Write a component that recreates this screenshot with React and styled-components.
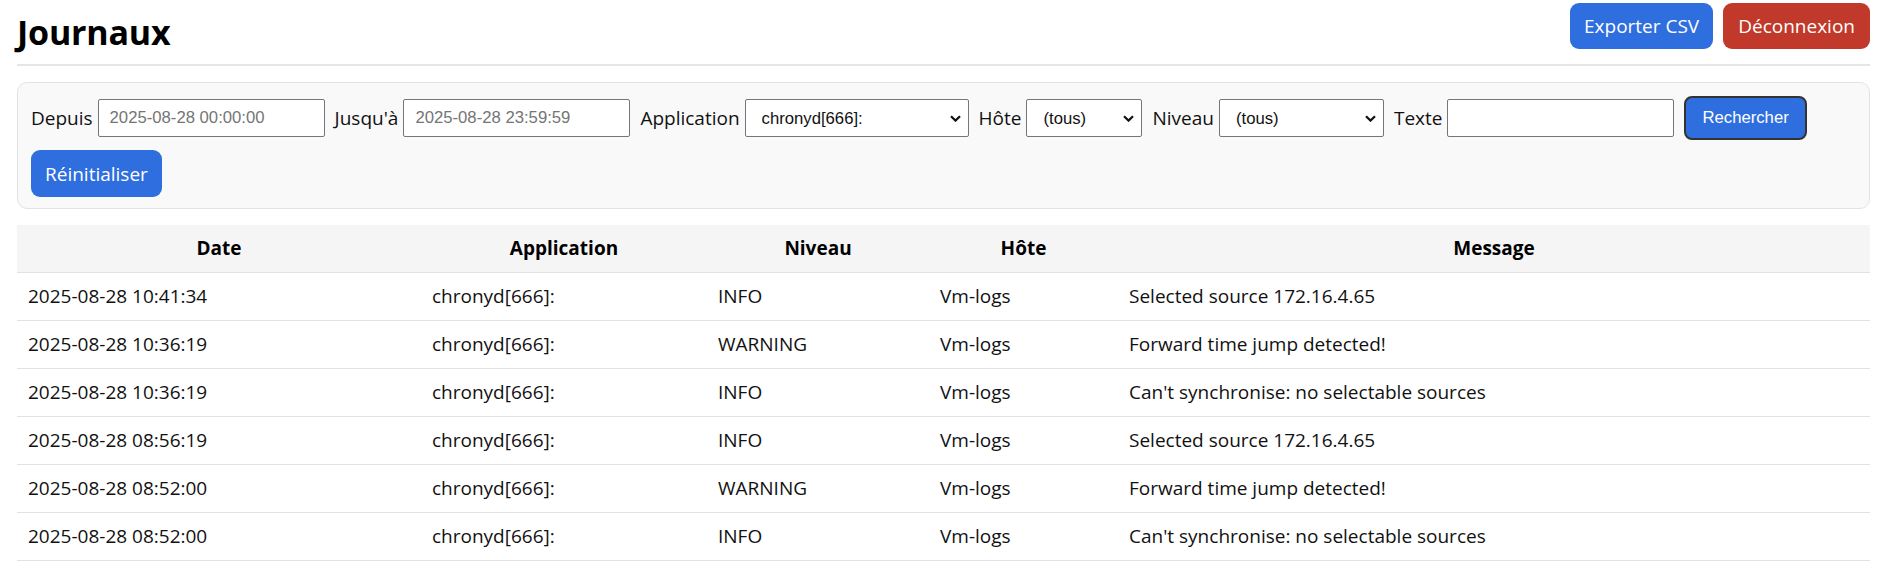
import React from "react";
import styled, { createGlobalStyle } from "styled-components";

const GlobalStyle = createGlobalStyle`
  html, body { margin: 0; padding: 0; background: #ffffff; }
  body {
    font-family: "Open Sans", "Noto Sans", Arial, sans-serif;
    color: #111111;
  }
  * { box-sizing: border-box; }
`;

const Page = styled.div`
  padding: 0 9px 0 17px;
`;

const Header = styled.header`
  display: flex;
  justify-content: space-between;
  align-items: flex-start;
  height: 66px;
  padding-top: 3px;
  border-bottom: 2px solid #e5e5e5;
`;

const Title = styled.h1`
  margin: 6px 0 0;
  font-size: 34px;
  line-height: 46px;
  font-weight: 700;
  color: #000;
  letter-spacing: -0.2px;
`;

const Actions = styled.div`
  display: flex;
  gap: 10px;
`;

const ActionButton = styled.button`
  height: ${(p) => (p.$tall ? "47px" : "46px")};
  padding: 0 ${(p) => p.$pad || 15}px;
  border: none;
  border-radius: 9px;
  background: ${(p) => (p.$danger ? "#c0392b" : "#2f6ede")};
  color: #ffffff;
  font-family: "Open Sans", sans-serif;
  font-size: 19px;
  cursor: pointer;
`;

const FilterPanel = styled.form`
  margin-top: 16px;
  background: #f9f9f9;
  border: 1px solid #e3e3e3;
  border-radius: 10px;
  padding: 13px 14px 11px 13px;
  display: flex;
  flex-wrap: wrap;
  align-items: center;
  gap: 10px 10px;
`;

const Field = styled.label`
  display: inline-flex;
  align-items: center;
  gap: 5px;
  font-size: 19px;
  color: #111;
`;

const TextInput = styled.input`
  width: 227px;
  height: 38px;
  border: 1px solid #767676;
  border-radius: 2px;
  padding: 0 11px;
  background: #fff;
  font-family: "Liberation Sans", Arial, sans-serif;
  font-size: 16.7px;
  color: #111;
  &::placeholder { color: #757575; }
`;

const SelectWrap = styled.span`
  position: relative;
  display: inline-block;
  width: ${(p) => p.$w}px;
  height: 38px;
`;

const Select = styled.select`
  appearance: none;
  -webkit-appearance: none;
  width: 100%;
  height: 100%;
  border: 1px solid #767676;
  border-radius: 2px;
  padding: 0 28px 0 16px;
  background: #fff;
  font-family: "Liberation Sans", Arial, sans-serif;
  font-size: 16.7px;
  color: #111;
`;

const Chevron = styled.svg`
  position: absolute;
  right: 8px;
  top: 50%;
  margin-top: -3px;
  pointer-events: none;
`;

const SearchButton = styled.button`
  height: 44px;
  padding: 0 16px;
  border: 2px solid #333;
  border-radius: 8px;
  background: #2f6ede;
  color: #fff;
  font-family: "Liberation Sans", Arial, sans-serif;
  font-size: 16.7px;
`;

const Table = styled.table`
  margin-top: 16px;
  width: 100%;
  border-collapse: collapse;
  table-layout: fixed;
  font-size: 19px;
`;

const Th = styled.th`
  background: #f5f5f5;
  font-weight: 700;
  text-align: center;
  padding: 11px;
  line-height: 25px;
  border-bottom: 1px solid #e2e2e2;
  color: #000;
`;

const Td = styled.td`
  padding: 11px;
  line-height: 25px;
  border-bottom: 1px solid #e2e2e2;
  text-align: left;
  color: #111;
  white-space: nowrap;
`;

const columns = [
  { label: "Date", w: 404 },
  { label: "Application", w: 286 },
  { label: "Niveau", w: 222 },
  { label: "Hôte", w: 189 },
  { label: "Message", w: 752 },
];

const rows = [
  ["2025-08-28 10:41:34", "chronyd[666]:", "INFO", "Vm-logs", "Selected source 172.16.4.65"],
  ["2025-08-28 10:36:19", "chronyd[666]:", "WARNING", "Vm-logs", "Forward time jump detected!"],
  ["2025-08-28 10:36:19", "chronyd[666]:", "INFO", "Vm-logs", "Can't synchronise: no selectable sources"],
  ["2025-08-28 08:56:19", "chronyd[666]:", "INFO", "Vm-logs", "Selected source 172.16.4.65"],
  ["2025-08-28 08:52:00", "chronyd[666]:", "WARNING", "Vm-logs", "Forward time jump detected!"],
  ["2025-08-28 08:52:00", "chronyd[666]:", "INFO", "Vm-logs", "Can't synchronise: no selectable sources"],
];

function Dropdown({ width, value, options }) {
  return (
    <SelectWrap $w={width}>
      <Select defaultValue={value}>
        {options.map((o) => (
          <option key={o}>{o}</option>
        ))}
      </Select>
      <Chevron width="11" height="7" viewBox="0 0 11 7">
        <polyline points="1,1.2 5.5,5.6 10,1.2" fill="none" stroke="#111" strokeWidth="2.2" />
      </Chevron>
    </SelectWrap>
  );
}

export default function App() {
  return (
    <>
      <GlobalStyle />
      <Page>
        <Header>
          <Title>Journaux</Title>
          <Actions>
            <ActionButton $pad={14}>Exporter CSV</ActionButton>
            <ActionButton $danger $pad={15}>Déconnexion</ActionButton>
          </Actions>
        </Header>

        <FilterPanel onSubmit={(e) => e.preventDefault()}>
          <Field>
            Depuis
            <TextInput placeholder="2025-08-28 00:00:00" />
          </Field>
          <Field>
            Jusqu'à
            <TextInput placeholder="2025-08-28 23:59:59" />
          </Field>
          <Field>
            Application
            <Dropdown width={224} value="chronyd[666]:" options={["(toutes)", "chronyd[666]:"]} />
          </Field>
          <Field>
            Hôte
            <Dropdown width={116} value="(tous)" options={["(tous)", "Vm-logs"]} />
          </Field>
          <Field>
            Niveau
            <Dropdown width={165} value="(tous)" options={["(tous)", "INFO", "WARNING"]} />
          </Field>
          <Field>
            Texte
            <TextInput />
          </Field>
          <SearchButton type="submit">Rechercher</SearchButton>
          <ActionButton type="button" $tall $pad={14}>Réinitialiser</ActionButton>
        </FilterPanel>

        <Table>
          <colgroup>
            {columns.map((c) => (
              <col key={c.label} style={{ width: c.w }} />
            ))}
          </colgroup>
          <thead>
            <tr>
              {columns.map((c) => (
                <Th key={c.label}>{c.label}</Th>
              ))}
            </tr>
          </thead>
          <tbody>
            {rows.map((r, i) => (
              <tr key={i}>
                {r.map((cell, j) => (
                  <Td key={j}>{cell}</Td>
                ))}
              </tr>
            ))}
          </tbody>
        </Table>
      </Page>
    </>
  );
}
